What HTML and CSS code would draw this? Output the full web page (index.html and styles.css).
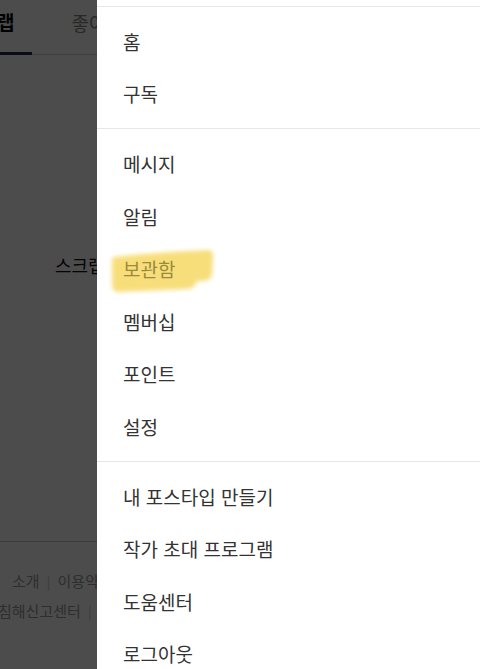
FILE: index.html
```html
<!DOCTYPE html>
<html lang="ko">
<head>
<meta charset="utf-8">
<link rel="stylesheet" href="styles.css">
</head>
<body>
<div class="page">
  <div class="tabs">
    <div class="tab active">스크랩</div>
    <div class="tab">좋아요</div>
  </div>
  <div class="empty">스크랩한 포스트가 없습니다</div>
  <footer class="footer">
    <div class="links l1">소개 <span class="sep">|</span> 이용약관 <span class="sep">|</span> 개인정보처리방침</div>
    <div class="links l2">침해신고센터 <span class="sep">|</span> 고객센터</div>
  </footer>
</div>
<div class="dim"></div>
<nav class="drawer">
  <div class="group">
    <a class="item">홈</a>
    <a class="item">구독</a>
  </div>
  <div class="group">
    <a class="item">메시지</a>
    <a class="item">알림</a>
    <a class="item marked"><svg class="hl" width="110" height="50" viewBox="0 0 110 50"><defs><filter id="b"><feGaussianBlur stdDeviation="2"/></filter></defs><path filter="url(#b)" d="M6 10 C30 7 60 5 100 3 C104 3 106 7 105 12 L104 28 C103 32 99 34 92 34 L88 35 C87 40 84 42 78 42 C58 43 30 44 10 45 C6 45 4 42 4 38 L4 16 C4 12 4 10 6 10 Z" fill="#f6d964" opacity="0.85"/></svg><span class="txt">보관함</span></a>
    <a class="item">멤버십</a>
    <a class="item">포인트</a>
    <a class="item">설정</a>
  </div>
  <div class="group">
    <a class="item">내 포스타입 만들기</a>
    <a class="item">작가 초대 프로그램</a>
    <a class="item">도움센터</a>
    <a class="item">로그아웃</a>
  </div>
</nav>
</body>
</html>
```

FILE: styles.css
```css
html, body {
  margin: 0;
  padding: 0;
  width: 480px;
  height: 669px;
  overflow: hidden;
  font-family: "Noto Sans CJK KR", "Noto Sans", sans-serif;
}
body { position: relative; background: #fff; }

.page {
  width: 480px;
  height: 669px;
  display: flex;
  flex-direction: column;
  overflow: hidden;
}
.tabs {
  display: flex;
  height: 54px;
  border-bottom: 1px solid #d8d8d8;
  margin-left: -41px;
  align-items: stretch;
}
.tab {
  font-size: 19px;
  color: #888;
  padding: 0 3px;
  margin-right: 36px;
  display: flex;
  align-items: center;
  padding-bottom: 10px;
  box-sizing: border-box;
}
.tab.active {
  color: #000;
  font-weight: 700;
  border-bottom: 3px solid #1d2b5c;
  padding-right: 18px;
  margin-bottom: -1px;
}
.empty {
  margin-top: 197px;
  padding-left: 55px;
  font-size: 18px;
  color: #111;
  white-space: nowrap;
}
.footer {
  margin-top: 263px;
  border-top: 1px solid #c8c8c8;
  padding-top: 28px;
  font-size: 15px;
  color: #9a9a9a;
  white-space: nowrap;
}
.links { height: 30px; line-height: 22px; }
.l1 { padding-left: 12px; }
.l2 { margin-left: -2px; }
.sep { color: #c4c4c4; margin: 0 3px; font-size: 13px; }

.dim {
  position: absolute;
  inset: 0;
  background: rgba(0, 0, 0, 0.7);
}

.drawer {
  position: absolute;
  top: 0;
  left: 97px;
  right: 0;
  bottom: 0;
  background: #fff;
  padding-top: 6px;
  overflow: hidden;
}
.group {
  border-top: 1px solid #e6e6e6;
  padding: 8px 0 8px;
}
.item {
  display: flex;
  align-items: center;
  height: 52.6px;
  padding-left: 26px;
  font-size: 19px;
  color: #333;
  position: relative;
  white-space: nowrap;
}
.marked .hl {
  position: absolute;
  left: 11px;
  top: 5px;
}
.marked .txt {
  position: relative;
  color: #9b8a3e;
}
```
